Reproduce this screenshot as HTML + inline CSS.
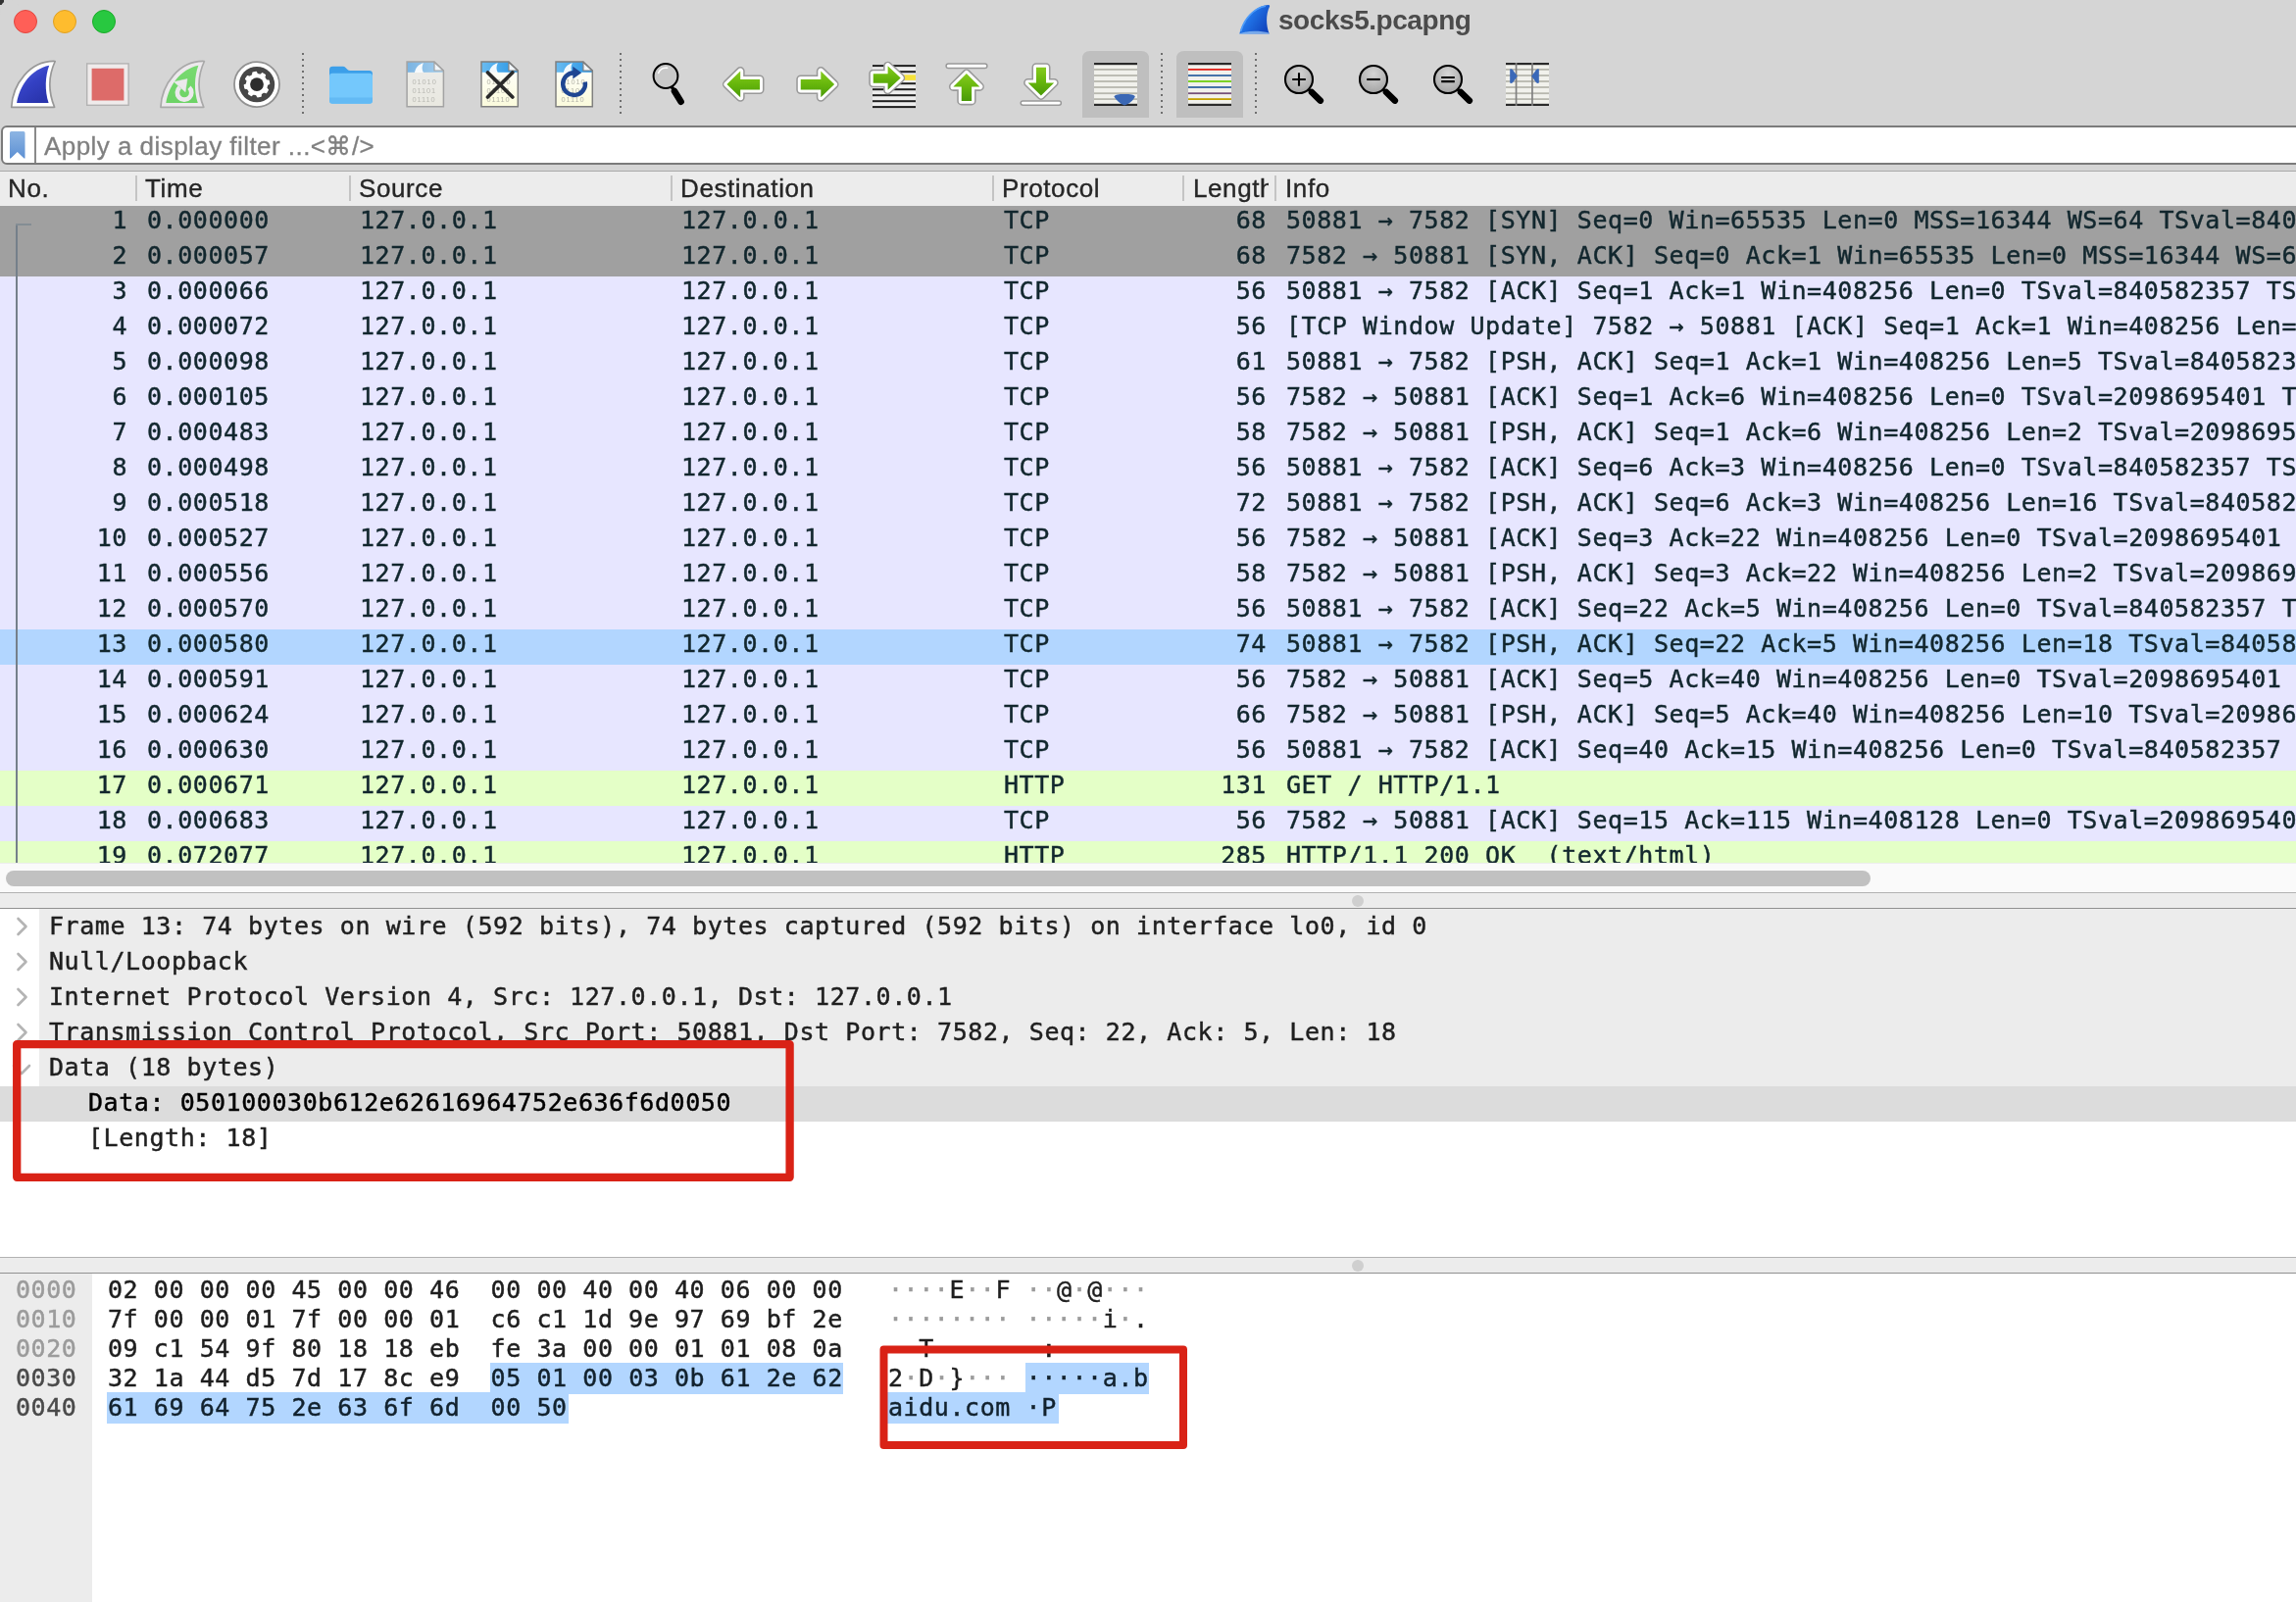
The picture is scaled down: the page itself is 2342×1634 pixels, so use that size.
<!DOCTYPE html>
<html lang="en">
<head>
<meta charset="utf-8">
<title>socks5.pcapng</title>
<style>
*{box-sizing:border-box;margin:0;padding:0}
html,body{width:2342px;height:1634px;overflow:hidden;background:#d5d5d5}
body{position:relative;font-family:"Liberation Sans",sans-serif;color:#222}
.abs{position:absolute}
.pr,.dr,.hr{-webkit-text-stroke:0.45px}
#app{position:absolute;left:0;top:0;width:2342px;height:1634px;overflow:hidden;will-change:transform;background:#d5d5d5}
#corner{position:absolute;left:0;top:0;width:4px;height:5px;background:#333}
#corner i{position:absolute;left:0;top:0;width:20px;height:20px;border-radius:10px;background:#d5d5d5}
.tl{position:absolute;top:10px;width:24px;height:24px;border-radius:12px;border:1px solid}
#title{position:absolute;left:1304px;top:2px;height:38px;line-height:38px;font-size:28px;font-weight:bold;color:#4b4b4b;letter-spacing:-0.45px;white-space:pre}
.ico{position:absolute}
.sep{position:absolute;top:54px;width:2px;height:63px;background:repeating-linear-gradient(to bottom,#6f6f6f 0,#6f6f6f 2px,transparent 2px,transparent 6px)}
.pressed{position:absolute;top:52px;width:68px;height:68px;border-radius:9px;background:#bdbdbd}
#filter{position:absolute;left:1px;top:128px;width:2400px;height:40px;border:2px solid #7b7b7b;border-radius:6px;background:#fff}
#filter .bm{position:absolute;left:6.3px;top:2px}
#filter .vl{position:absolute;left:32px;top:0;width:2px;height:36px;background:#8a8a8a}
#filter .ph{position:absolute;left:42px;top:1px;height:36px;line-height:36px;font-size:26px;color:#808080;white-space:pre;letter-spacing:0.45px;-webkit-text-stroke:0.3px}
#hdr{position:absolute;left:0;top:174px;width:2342px;height:36px;background:#ececec;border-top:1px solid #aaa}
#hdr span{position:absolute;top:0;height:35px;line-height:35px;font-size:26px;color:#262626;white-space:pre;letter-spacing:0.6px;-webkit-text-stroke:0.35px}
#hdr i{position:absolute;top:4px;width:2px;height:26px;background:#c4c4c4}
#plist{position:absolute;left:0;top:210px;width:2342px;height:670px;overflow:hidden;background:#fff}
.pr{position:relative;height:36px;width:2342px;overflow:hidden;font-family:"DejaVu Sans Mono","Liberation Mono",monospace;font-size:25px;letter-spacing:0.57px;line-height:30px;white-space:pre;color:#12272e}
.pr .c{position:absolute;top:0;height:36px}
.pr.syn{background:#a0a0a0}
.pr.tcp{background:#e7e6ff}
.pr.web{background:#e4ffc7}
.pr.sel{background:#b2d6ff}
.no{left:0;width:130px;text-align:right}
.tm{left:150px}
.src{left:367px}
.dst{left:695px}
.pro{left:1024px}
.len{left:1200px;width:92px;text-align:right}
.inf{left:1312px}
#relline{position:absolute;left:16.3px;top:229px;width:1.5px;height:651px;background:#75808a}
#reltick{position:absolute;left:16px;top:228px;width:16px;height:2px;background:#848d94}
#hsb{position:absolute;left:0;top:880px;width:2342px;height:30px;background:#fafafa;border-top:1px solid #ededed}
#hsb i{position:absolute;left:6px;top:7px;width:1902px;height:16px;border-radius:8px;background:#c1c1c1}
.split{position:absolute;left:0;width:2342px;height:17px;background:#ececec;border-top:1px solid #b2b2b2;border-bottom:1px solid #919191}
.split i{position:absolute;left:1379px;top:2px;width:12px;height:12px;border-radius:6px;background:#cfcfcf}
#detail{position:absolute;left:0;top:927px;padding-top:1px;width:2342px;height:355px;background:#fff;overflow:hidden}
.dr{position:relative;height:36px;width:2342px;font-family:"DejaVu Sans Mono","Liberation Mono",monospace;font-size:25px;letter-spacing:0.57px;line-height:30px;white-space:pre;color:#1f1f1f}
.dr .bg{position:absolute;left:40px;top:-1px;right:0;height:37px;background:#ececec}
.dr .tx{position:absolute;left:50px;top:2px}
.dr svg{position:absolute;left:14px;top:6px}
.dr.sel{background:#dcdcdc;color:#000}
.dr.ch .tx{left:90px}
#hex{position:absolute;left:0;top:1299px;width:2342px;height:335px;background:#fff;overflow:hidden}
#hex .gut{position:absolute;left:0;top:0;width:94px;height:335px;background:#ececec}
.hr{position:absolute;left:0;height:30px;width:2342px;font-family:"DejaVu Sans Mono","Liberation Mono",monospace;font-size:25px;letter-spacing:0.57px;line-height:30px;white-space:pre;color:#1e1e1e}
.hr .of{position:absolute;left:16px;top:0;color:#9b9b9b}
.hr .of.d{color:#4a4a4a}
.hr .hx{position:absolute;left:110px;top:0}
.hr .as{position:absolute;left:906px;top:0}
.hl{background:#b2d6ff;color:#12222e;margin-left:-1px;padding-left:1px;padding-top:0.6px;padding-bottom:1.9px}
.hl.e{padding-right:1.8px}
.g{color:#9b9b9b}
.hl .g{color:#12222e}
.redbox{position:absolute;left:0;top:0}
</style>
</head>
<body>

<div id="app">
<div id="corner"><i></i></div>
<div class="tl" style="left:14px;background:#ff5f57;border-color:#e2463f"></div>
<div class="tl" style="left:54px;background:#febc2e;border-color:#dfa023"></div>
<div class="tl" style="left:94px;background:#28c840;border-color:#1aab29"></div>
<div id="title">socks5.pcapng</div>
<svg class="abs" style="left:0;top:0" width="1700" height="128" viewBox="0 0 1700 128">
<defs>
<linearGradient id="finb" x1="0" y1="0" x2="0.6" y2="1"><stop offset="0" stop-color="#5563e0"/><stop offset="0.55" stop-color="#3441c4"/><stop offset="1" stop-color="#2a35ae"/></linearGradient>
<linearGradient id="fing" x1="0" y1="0" x2="0" y2="1"><stop offset="0" stop-color="#78da70"/><stop offset="1" stop-color="#6dd366"/></linearGradient>
<linearGradient id="grn" x1="0" y1="0" x2="0" y2="1"><stop offset="0" stop-color="#86cb1e"/><stop offset="0.5" stop-color="#66b60c"/><stop offset="1" stop-color="#4a9a08"/></linearGradient>
<radialGradient id="zg" cx="0.5" cy="0.3" r="0.8"><stop offset="0" stop-color="#d6d6d6"/><stop offset="1" stop-color="#9c9c9c"/></radialGradient>
<linearGradient id="ticon" x1="0" y1="0" x2="1" y2="0.6"><stop offset="0" stop-color="#4a9af5"/><stop offset="0.5" stop-color="#1f6fe3"/><stop offset="1" stop-color="#1248c0"/></linearGradient>
</defs>
<path d="M1264.3,34.5 C1267.4,20.2 1278.6,6.2 1293.6,5 Q1295.4,5 1295.1,6.4 C1291,15.1 1291.3,25.4 1294.7,34.5 Z" fill="url(#ticon)"/>
<path d="M1265.6,32 C1268.6,20.4 1278.6,8.2 1291,6.3" fill="none" stroke="#58a6ff" stroke-width="1.6" opacity="0.8"/>
<path d="M1264.2,34.7 C1271,31 1285,31.2 1294.4,33.4 L1294.8,34.8 Z" fill="#8fbdf3" opacity="0.8"/>
<g transform="translate(0,0)"><path d="M11.7,109.3 C12.8,86.1 30.5,61.6 56.2,62.5 C50,76 48.5,92 55.6,109.3 Z" fill="#ffffff" stroke="#989898" stroke-width="1.7" stroke-linejoin="round"/><path d="M17.1,105 C20,87 32,70.5 50.2,66.7 C46,78 45.5,92 49.6,105 Z" fill="url(#finb)"/></g>
<rect x="88.7" y="64.9" width="42.4" height="42.4" fill="#efebeb" stroke="#b2b2b2" stroke-width="1.4"/>
<rect x="93.6" y="69.8" width="32.8" height="32.7" fill="#dd6b69"/>
<g transform="translate(152.2,0)"><path d="M11.7,109.3 C12.8,86.1 30.5,61.6 56.2,62.5 C50,76 48.5,92 55.6,109.3 Z" fill="#ece9ec" stroke="#a9a9a9" stroke-width="1.7" stroke-linejoin="round"/><path d="M17.1,105 C20,87 32,70.5 50.2,66.7 C46,78 45.5,92 49.6,105 Z" fill="url(#fing)"/></g>
<path d="M193.0,89.25 A7.2,7.2 0 1 1 183.4,89.0" fill="none" stroke="#ebe9ec" stroke-width="4.7"/>
<path d="M177.5,83.5 L191,80.5 L189.1,93.8 Z" fill="#ebe9ec" stroke="#ebe9ec" stroke-width="0.5"/>
<circle cx="262" cy="86.1" r="23" fill="#ffffff" stroke="#929292" stroke-width="1.8"/>
<circle cx="262" cy="86.1" r="18.2" fill="#474747"/>
<path d="M271.59,81.82 L274.03,82.04 L274.68,85.36 L272.49,86.48 L271.81,89.85 L273.38,91.74 L271.49,94.54 L269.15,93.79 L266.28,95.69 L266.06,98.13 L262.74,98.78 L261.62,96.59 L258.25,95.91 L256.36,97.48 L253.56,95.59 L254.31,93.25 L252.41,90.38 L249.97,90.16 L249.32,86.84 L251.51,85.72 L252.19,82.35 L250.62,80.46 L252.51,77.66 L254.85,78.41 L257.72,76.51 L257.94,74.07 L261.26,73.42 L262.38,75.61 L265.75,76.29 L267.64,74.72 L270.44,76.61 L269.69,78.95Z" fill="#ffffff" stroke="#ffffff" stroke-width="1.3" stroke-linejoin="round"/>
<circle cx="262" cy="86.1" r="6.9" fill="#2e2e2e"/>
<path d="M336,71.2 q0,-3.4 3.4,-3.4 h10.4 q1.6,0 2.7,1.1 l2,2 q1.1,1.1 2.7,1.1 h19.4 q3.4,0 3.4,3.4 v12 h-44 z" fill="#3c9fe9"/>
<path d="M336,78 q0,-3.2 3.2,-3.2 h37.6 q3.2,0 3.2,3.2 v24.6 q0,3.2 -3.2,3.2 h-37.6 q-3.2,0 -3.2,-3.2 z" fill="#74c8fc"/>
<path d="M336,99.6 h44 v3 q0,3.2 -3.2,3.2 h-37.6 q-3.2,0 -3.2,-3.2 z" fill="#63baf4"/>
<g transform="translate(414.4,0)"><defs><linearGradient id="f1b" x1="0" y1="0" x2="1" y2="0"><stop offset="0" stop-color="#79b3e2"/><stop offset="1" stop-color="#a6d0ef"/></linearGradient><linearGradient id="f1y" x1="0" y1="0" x2="0" y2="1"><stop offset="0" stop-color="#ececea"/><stop offset="1" stop-color="#e9e8e0"/></linearGradient><clipPath id="f1c"><path d="M0.7,63.1 H28.6 L38,72 V108.8 H0.7 Z"/></clipPath></defs><path d="M0.7,63.1 H28.6 L38,72 V108.8 H0.7 Z" fill="url(#f1y)"/><g clip-path="url(#f1c)"><rect x="0" y="62" width="39" height="11.8" fill="url(#f1b)"/><path d="M8.5,74 C9.5,69 12.5,65.5 17.5,64.2 C15.8,67.5 15.8,71 17.5,74 Z" fill="#fff" opacity="0.92"/></g><path d="M28.6,63.1 V72 H38 Z" fill="#f1f6fb" stroke="#a3a3a3" stroke-width="1.2" stroke-linejoin="round"/><text x="6.2" y="86.3" font-family="Liberation Sans, sans-serif" font-size="7.4" letter-spacing="0.9" fill="#b9b9b3">01010</text><text x="6.2" y="95.1" font-family="Liberation Sans, sans-serif" font-size="7.4" letter-spacing="0.9" fill="#b9b9b3">01101</text><text x="6.2" y="104.0" font-family="Liberation Sans, sans-serif" font-size="7.4" letter-spacing="0.9" fill="#b9b9b3">01110</text><path d="M0.7,63.1 H28.6 L38,72 V108.8 H0.7 Z" fill="none" stroke="#a3a3a3" stroke-width="1.5" stroke-linejoin="miter"/></g>
<g transform="translate(490.3,0)"><defs><linearGradient id="f2b" x1="0" y1="0" x2="1" y2="0"><stop offset="0" stop-color="#6bbcf1"/><stop offset="1" stop-color="#2794e4"/></linearGradient><linearGradient id="f2y" x1="0" y1="0" x2="0" y2="1"><stop offset="0" stop-color="#ffffff"/><stop offset="1" stop-color="#fbfbdc"/></linearGradient><clipPath id="f2c"><path d="M0.7,63.1 H28.6 L38,72 V108.8 H0.7 Z"/></clipPath></defs><path d="M0.7,63.1 H28.6 L38,72 V108.8 H0.7 Z" fill="url(#f2y)"/><g clip-path="url(#f2c)"><rect x="0" y="62" width="39" height="11.8" fill="url(#f2b)"/><path d="M8.5,74 C9.5,69 12.5,65.5 17.5,64.2 C15.8,67.5 15.8,71 17.5,74 Z" fill="#fff" opacity="0.92"/></g><path d="M28.6,63.1 V72 H38 Z" fill="#f1f6fb" stroke="#7f7f7f" stroke-width="1.2" stroke-linejoin="round"/><text x="6.2" y="86.3" font-family="Liberation Sans, sans-serif" font-size="7.4" letter-spacing="0.9" fill="#b4b4a8">01010</text><text x="6.2" y="95.1" font-family="Liberation Sans, sans-serif" font-size="7.4" letter-spacing="0.9" fill="#b4b4a8">01101</text><text x="6.2" y="104.0" font-family="Liberation Sans, sans-serif" font-size="7.4" letter-spacing="0.9" fill="#b4b4a8">01110</text><path d="M0.7,63.1 H28.6 L38,72 V108.8 H0.7 Z" fill="none" stroke="#7f7f7f" stroke-width="1.5" stroke-linejoin="miter"/></g>
<path d="M497.5,74 L522.8,99 M522.8,74 L497.5,99" stroke="#2a2a2a" stroke-width="3.7" stroke-linecap="round" fill="none"/>
<g transform="translate(566.3,0)"><defs><linearGradient id="f3b" x1="0" y1="0" x2="1" y2="0"><stop offset="0" stop-color="#6bbcf1"/><stop offset="1" stop-color="#2794e4"/></linearGradient><linearGradient id="f3y" x1="0" y1="0" x2="0" y2="1"><stop offset="0" stop-color="#ffffff"/><stop offset="1" stop-color="#fbfbdc"/></linearGradient><clipPath id="f3c"><path d="M0.7,63.1 H28.6 L38,72 V108.8 H0.7 Z"/></clipPath></defs><path d="M0.7,63.1 H28.6 L38,72 V108.8 H0.7 Z" fill="url(#f3y)"/><g clip-path="url(#f3c)"><rect x="0" y="62" width="39" height="11.8" fill="url(#f3b)"/><path d="M8.5,74 C9.5,69 12.5,65.5 17.5,64.2 C15.8,67.5 15.8,71 17.5,74 Z" fill="#fff" opacity="0.92"/></g><path d="M28.6,63.1 V72 H38 Z" fill="#f1f6fb" stroke="#7f7f7f" stroke-width="1.2" stroke-linejoin="round"/><text x="6.2" y="86.3" font-family="Liberation Sans, sans-serif" font-size="7.4" letter-spacing="0.9" fill="#b4b4a8">01010</text><text x="6.2" y="95.1" font-family="Liberation Sans, sans-serif" font-size="7.4" letter-spacing="0.9" fill="#b4b4a8">01101</text><text x="6.2" y="104.0" font-family="Liberation Sans, sans-serif" font-size="7.4" letter-spacing="0.9" fill="#b4b4a8">01110</text><path d="M0.7,63.1 H28.6 L38,72 V108.8 H0.7 Z" fill="none" stroke="#7f7f7f" stroke-width="1.5" stroke-linejoin="miter"/></g>
<path d="M585.5,74.2 A11.4,11.4 0 1 0 596.8,83.6" fill="none" stroke="#1f4692" stroke-width="4.4"/>
<path d="M584.3,67.8 L593.2,74.2 L584.3,80.4 Z" fill="#1f4692"/>
<line x1="684.6" y1="87.6" x2="688" y2="93" stroke="#000" stroke-width="3.4"/>
<line x1="688" y1="93" x2="694.6" y2="103.8" stroke="#000" stroke-width="6.6" stroke-linecap="round"/>
<circle cx="679" cy="77.5" r="12.4" fill="#c9c9c9" stroke="#000" stroke-width="2"/>
<path d="M671.6,74.4 A8.2,8.2 0 0 1 680.6,69.3" fill="none" stroke="#ffffff" stroke-width="1.5" stroke-linecap="round"/>
<path d="M741.4,86 L755.2,72.6 V81 H775 V91.6 H755.2 V99.3 Z" fill="none" stroke="#999999" stroke-width="9" stroke-linejoin="round"/><path d="M741.4,86 L755.2,72.6 V81 H775 V91.6 H755.2 V99.3 Z" fill="none" stroke="#ffffff" stroke-width="5.9" stroke-linejoin="round"/><path d="M741.4,86 L755.2,72.6 V81 H775 V91.6 H755.2 V99.3 Z" fill="url(#grn)"/>
<path d="M851.1,86 L837.3,72.6 V81 H816.75 V91.6 H837.3 V99.3 Z" fill="none" stroke="#999999" stroke-width="9" stroke-linejoin="round"/><path d="M851.1,86 L837.3,72.6 V81 H816.75 V91.6 H837.3 V99.3 Z" fill="none" stroke="#ffffff" stroke-width="5.9" stroke-linejoin="round"/><path d="M851.1,86 L837.3,72.6 V81 H816.75 V91.6 H837.3 V99.3 Z" fill="url(#grn)"/>
<rect x="890" y="66" width="44" height="44" fill="#ededed"/><rect x="890" y="66.1" width="44" height="2" fill="#1f1f1f"/><rect x="890" y="72.2" width="44" height="2" fill="#1f1f1f"/><rect x="890" y="84.2" width="44" height="2" fill="#1f1f1f"/><rect x="890" y="90.2" width="44" height="2" fill="#1f1f1f"/><rect x="890" y="96.2" width="44" height="2" fill="#1f1f1f"/><rect x="890" y="102.2" width="44" height="2" fill="#1f1f1f"/><rect x="890" y="108.1" width="44" height="2" fill="#1f1f1f"/><rect x="920" y="76.3" width="14" height="5.6" fill="#f6e23c"/>
<path d="M918.7,79.5 L905.6,67.2 V75.25 H890.75 V84.75 H905.6 V91.8 Z" fill="none" stroke="#999999" stroke-width="9" stroke-linejoin="round"/><path d="M918.7,79.5 L905.6,67.2 V75.25 H890.75 V84.75 H905.6 V91.8 Z" fill="none" stroke="#ffffff" stroke-width="5.9" stroke-linejoin="round"/><path d="M918.7,79.5 L905.6,67.2 V75.25 H890.75 V84.75 H905.6 V91.8 Z" fill="url(#grn)"/>
<rect x="965.1" y="64.9" width="41.8" height="4.6" rx="2.3" fill="#ffffff" stroke="#999999" stroke-width="1.5"/>
<path d="M985.9,75 L999.4,88.4 H991.1 V102.9 H980.75 V88.4 H972.4 Z" fill="none" stroke="#999999" stroke-width="9" stroke-linejoin="round"/><path d="M985.9,75 L999.4,88.4 H991.1 V102.9 H980.75 V88.4 H972.4 Z" fill="none" stroke="#ffffff" stroke-width="5.9" stroke-linejoin="round"/><path d="M985.9,75 L999.4,88.4 H991.1 V102.9 H980.75 V88.4 H972.4 Z" fill="url(#grn)"/>
<rect x="1041.2" y="102.9" width="41.2" height="4.4" rx="2.2" fill="#ffffff" stroke="#999999" stroke-width="1.5"/>
<path d="M1061.9,97.4 L1075.2,84.4 H1067 V68.75 H1057 V84.4 H1048.6 Z" fill="none" stroke="#999999" stroke-width="9" stroke-linejoin="round"/><path d="M1061.9,97.4 L1075.2,84.4 H1067 V68.75 H1057 V84.4 H1048.6 Z" fill="none" stroke="#ffffff" stroke-width="5.9" stroke-linejoin="round"/><path d="M1061.9,97.4 L1075.2,84.4 H1067 V68.75 H1057 V84.4 H1048.6 Z" fill="url(#grn)"/>
<path d="M1104,120 V60 q0,-8 8,-8 h52 q8,0 8,8 V120 Z" fill="#bfbfbf"/>
<path d="M1200,120 V60 q0,-8 8,-8 h52 q8,0 8,8 V120 Z" fill="#bfbfbf"/>
<rect x="1116" y="64" width="44" height="44" fill="#f1f1ec"/><rect x="1116" y="64" width="44" height="2.2" fill="#2a2a2a"/><rect x="1116" y="105.8" width="44" height="2.2" fill="#2a2a2a"/><rect x="1116" y="70.0" width="44" height="1.8" fill="#b7b7ae"/><rect x="1116" y="76.1" width="44" height="1.8" fill="#b7b7ae"/><rect x="1116" y="82.1" width="44" height="1.8" fill="#b7b7ae"/><rect x="1116" y="88.1" width="44" height="1.8" fill="#b7b7ae"/><rect x="1116" y="94.3" width="44" height="1.8" fill="#b7b7ae"/><rect x="1116" y="100.2" width="44" height="1.8" fill="#b7b7ae"/>
<path d="M1136.4,98.6 C1137.5,96.4 1141,96 1147,96 C1153,96 1156.8,96.4 1157.8,98.6 C1156,102.5 1152,106 1147,107.6 C1142.5,106 1138.5,102.5 1136.4,98.6 Z" fill="#3b68b5"/>
<rect x="1212" y="64" width="44" height="44" fill="#f1f1ec"/><rect x="1212" y="64" width="44" height="2.2" fill="#2a2a2a"/><rect x="1212" y="105.8" width="44" height="2.2" fill="#2a2a2a"/><rect x="1212" y="70.0" width="44" height="1.8" fill="#e2241c"/><rect x="1212" y="76.1" width="44" height="1.8" fill="#3465a4"/><rect x="1212" y="82.1" width="44" height="1.8" fill="#6fcf12"/><rect x="1212" y="88.1" width="44" height="1.8" fill="#3465a4"/><rect x="1212" y="94.3" width="44" height="1.8" fill="#75507b"/><rect x="1212" y="100.2" width="44" height="1.8" fill="#c4a000"/>
<line x1="1334" y1="90.3" x2="1338" y2="94" stroke="#000" stroke-width="3.2"/><line x1="1338" y1="94" x2="1346.8" y2="102.6" stroke="#000" stroke-width="6.6" stroke-linecap="round"/><circle cx="1325" cy="81" r="14" fill="url(#zg)" stroke="#000" stroke-width="2.1"/><path d="M1318.2,81 h13.6 M1325,74.2 v13.6" stroke="#000" stroke-width="2.1" fill="none"/>
<line x1="1410" y1="90.3" x2="1414" y2="94" stroke="#000" stroke-width="3.2"/><line x1="1414" y1="94" x2="1422.8" y2="102.6" stroke="#000" stroke-width="6.6" stroke-linecap="round"/><circle cx="1401" cy="81" r="14" fill="url(#zg)" stroke="#000" stroke-width="2.1"/><path d="M1394.2,81 h13.6" stroke="#000" stroke-width="2.1" fill="none"/>
<line x1="1486" y1="90.3" x2="1490" y2="94" stroke="#000" stroke-width="3.2"/><line x1="1490" y1="94" x2="1498.8" y2="102.6" stroke="#000" stroke-width="6.6" stroke-linecap="round"/><circle cx="1477" cy="81" r="14" fill="url(#zg)" stroke="#000" stroke-width="2.1"/><path d="M1470.2,79 h13.6 M1470.2,83.1 h13.6" stroke="#000" stroke-width="2.1" fill="none"/>
<rect x="1536" y="64" width="44" height="44" fill="#f1f1ec"/><rect x="1536" y="64" width="44" height="2.2" fill="#2a2a2a"/><rect x="1536" y="105.8" width="44" height="2.2" fill="#2a2a2a"/><rect x="1536" y="70.0" width="44" height="1.8" fill="#b7b7ae"/><rect x="1536" y="76.1" width="44" height="1.8" fill="#b7b7ae"/><rect x="1536" y="82.1" width="44" height="1.8" fill="#b7b7ae"/><rect x="1536" y="88.1" width="44" height="1.8" fill="#b7b7ae"/><rect x="1536" y="94.3" width="44" height="1.8" fill="#b7b7ae"/><rect x="1536" y="100.2" width="44" height="1.8" fill="#b7b7ae"/>
<rect x="1545.7" y="64" width="1.7" height="44" fill="#808080"/><rect x="1562.1" y="64" width="1.7" height="44" fill="#808080"/>
<path d="M1540.2,70.6 Q1541.5,69.8 1543,71.2 L1547.8,77.7 L1543,84.2 Q1541.5,85.4 1540.2,84.6 Z" fill="#3a68b8"/>
<path d="M1569.8,70.6 Q1568.5,69.8 1567,71.2 L1562.2,77.7 L1567,84.2 Q1568.5,85.4 1569.8,84.6 Z" fill="#3a68b8"/>
</svg>
<div class="sep" style="left:308px"></div>
<div class="sep" style="left:632px"></div>
<div class="sep" style="left:1184px"></div>
<div class="sep" style="left:1280px"></div>
<div id="filter">
<svg class="bm" width="18" height="30" viewBox="0 0 18 30"><defs><linearGradient id="bmg" x1="0" y1="0" x2="0" y2="1"><stop offset="0" stop-color="#8db5e3"/><stop offset="1" stop-color="#5d90d3"/></linearGradient></defs><path d="M2.5 2h12.5q1.5 0 1.5 1.5v25.3q0 1.4 -1.2 0.5l-6.55-6.2-6.55 6.2q-1.2 0.9 -1.2 -0.5v-25.3q0-1.5 1.5-1.5z" fill="url(#bmg)"/></svg>
<div class="vl"></div>
<div class="ph">Apply a display filter ...&lt;⌘/&gt;</div>
</div>
<div id="hdr">
<span style="left:8px">No.</span><i style="left:138px"></i>
<span style="left:148px">Time</span><i style="left:356px"></i>
<span style="left:366px">Source</span><i style="left:684px"></i>
<span style="left:694px">Destination</span><i style="left:1012px"></i>
<span style="left:1022px">Protocol</span><i style="left:1206px"></i>
<span style="left:1217px;width:77px;overflow:hidden">Length</span><i style="left:1300px"></i>
<span style="left:1311px">Info</span>
</div>

<div id="plist">
<div class="pr syn"><span class="c no">1</span><span class="c tm">0.000000</span><span class="c src">127.0.0.1</span><span class="c dst">127.0.0.1</span><span class="c pro">TCP</span><span class="c len">68</span><span class="c inf">50881 → 7582 [SYN] Seq=0 Win=65535 Len=0 MSS=16344 WS=64 TSval=840582357 TSecr=0 SACK_PERM</span></div>
<div class="pr syn"><span class="c no">2</span><span class="c tm">0.000057</span><span class="c src">127.0.0.1</span><span class="c dst">127.0.0.1</span><span class="c pro">TCP</span><span class="c len">68</span><span class="c inf">7582 → 50881 [SYN, ACK] Seq=0 Ack=1 Win=65535 Len=0 MSS=16344 WS=64 TSval=2098695401 TSecr=840582357 SACK_PERM</span></div>
<div class="pr tcp"><span class="c no">3</span><span class="c tm">0.000066</span><span class="c src">127.0.0.1</span><span class="c dst">127.0.0.1</span><span class="c pro">TCP</span><span class="c len">56</span><span class="c inf">50881 → 7582 [ACK] Seq=1 Ack=1 Win=408256 Len=0 TSval=840582357 TSecr=2098695401</span></div>
<div class="pr tcp"><span class="c no">4</span><span class="c tm">0.000072</span><span class="c src">127.0.0.1</span><span class="c dst">127.0.0.1</span><span class="c pro">TCP</span><span class="c len">56</span><span class="c inf">[TCP Window Update] 7582 → 50881 [ACK] Seq=1 Ack=1 Win=408256 Len=0 TSval=2098695401 TSecr=840582357</span></div>
<div class="pr tcp"><span class="c no">5</span><span class="c tm">0.000098</span><span class="c src">127.0.0.1</span><span class="c dst">127.0.0.1</span><span class="c pro">TCP</span><span class="c len">61</span><span class="c inf">50881 → 7582 [PSH, ACK] Seq=1 Ack=1 Win=408256 Len=5 TSval=840582357 TSecr=2098695401</span></div>
<div class="pr tcp"><span class="c no">6</span><span class="c tm">0.000105</span><span class="c src">127.0.0.1</span><span class="c dst">127.0.0.1</span><span class="c pro">TCP</span><span class="c len">56</span><span class="c inf">7582 → 50881 [ACK] Seq=1 Ack=6 Win=408256 Len=0 TSval=2098695401 TSecr=840582357</span></div>
<div class="pr tcp"><span class="c no">7</span><span class="c tm">0.000483</span><span class="c src">127.0.0.1</span><span class="c dst">127.0.0.1</span><span class="c pro">TCP</span><span class="c len">58</span><span class="c inf">7582 → 50881 [PSH, ACK] Seq=1 Ack=6 Win=408256 Len=2 TSval=2098695401 TSecr=840582357</span></div>
<div class="pr tcp"><span class="c no">8</span><span class="c tm">0.000498</span><span class="c src">127.0.0.1</span><span class="c dst">127.0.0.1</span><span class="c pro">TCP</span><span class="c len">56</span><span class="c inf">50881 → 7582 [ACK] Seq=6 Ack=3 Win=408256 Len=0 TSval=840582357 TSecr=2098695401</span></div>
<div class="pr tcp"><span class="c no">9</span><span class="c tm">0.000518</span><span class="c src">127.0.0.1</span><span class="c dst">127.0.0.1</span><span class="c pro">TCP</span><span class="c len">72</span><span class="c inf">50881 → 7582 [PSH, ACK] Seq=6 Ack=3 Win=408256 Len=16 TSval=840582357 TSecr=2098695401</span></div>
<div class="pr tcp"><span class="c no">10</span><span class="c tm">0.000527</span><span class="c src">127.0.0.1</span><span class="c dst">127.0.0.1</span><span class="c pro">TCP</span><span class="c len">56</span><span class="c inf">7582 → 50881 [ACK] Seq=3 Ack=22 Win=408256 Len=0 TSval=2098695401 TSecr=840582357</span></div>
<div class="pr tcp"><span class="c no">11</span><span class="c tm">0.000556</span><span class="c src">127.0.0.1</span><span class="c dst">127.0.0.1</span><span class="c pro">TCP</span><span class="c len">58</span><span class="c inf">7582 → 50881 [PSH, ACK] Seq=3 Ack=22 Win=408256 Len=2 TSval=2098695401 TSecr=840582357</span></div>
<div class="pr tcp"><span class="c no">12</span><span class="c tm">0.000570</span><span class="c src">127.0.0.1</span><span class="c dst">127.0.0.1</span><span class="c pro">TCP</span><span class="c len">56</span><span class="c inf">50881 → 7582 [ACK] Seq=22 Ack=5 Win=408256 Len=0 TSval=840582357 TSecr=2098695401</span></div>
<div class="pr sel"><span class="c no">13</span><span class="c tm">0.000580</span><span class="c src">127.0.0.1</span><span class="c dst">127.0.0.1</span><span class="c pro">TCP</span><span class="c len">74</span><span class="c inf">50881 → 7582 [PSH, ACK] Seq=22 Ack=5 Win=408256 Len=18 TSval=840582357 TSecr=2098695401</span></div>
<div class="pr tcp"><span class="c no">14</span><span class="c tm">0.000591</span><span class="c src">127.0.0.1</span><span class="c dst">127.0.0.1</span><span class="c pro">TCP</span><span class="c len">56</span><span class="c inf">7582 → 50881 [ACK] Seq=5 Ack=40 Win=408256 Len=0 TSval=2098695401 TSecr=840582357</span></div>
<div class="pr tcp"><span class="c no">15</span><span class="c tm">0.000624</span><span class="c src">127.0.0.1</span><span class="c dst">127.0.0.1</span><span class="c pro">TCP</span><span class="c len">66</span><span class="c inf">7582 → 50881 [PSH, ACK] Seq=5 Ack=40 Win=408256 Len=10 TSval=2098695401 TSecr=840582357</span></div>
<div class="pr tcp"><span class="c no">16</span><span class="c tm">0.000630</span><span class="c src">127.0.0.1</span><span class="c dst">127.0.0.1</span><span class="c pro">TCP</span><span class="c len">56</span><span class="c inf">50881 → 7582 [ACK] Seq=40 Ack=15 Win=408256 Len=0 TSval=840582357 TSecr=2098695401</span></div>
<div class="pr web"><span class="c no">17</span><span class="c tm">0.000671</span><span class="c src">127.0.0.1</span><span class="c dst">127.0.0.1</span><span class="c pro">HTTP</span><span class="c len">131</span><span class="c inf">GET / HTTP/1.1 </span></div>
<div class="pr tcp"><span class="c no">18</span><span class="c tm">0.000683</span><span class="c src">127.0.0.1</span><span class="c dst">127.0.0.1</span><span class="c pro">TCP</span><span class="c len">56</span><span class="c inf">7582 → 50881 [ACK] Seq=15 Ack=115 Win=408128 Len=0 TSval=2098695401 TSecr=840582357</span></div>
<div class="pr web"><span class="c no">19</span><span class="c tm">0.072077</span><span class="c src">127.0.0.1</span><span class="c dst">127.0.0.1</span><span class="c pro">HTTP</span><span class="c len">285</span><span class="c inf">HTTP/1.1 200 OK  (text/html)</span></div>
</div>
<div id="relline"></div><div id="reltick"></div>
<div id="hsb"><i></i></div>
<div class="split" style="top:910px"><i></i></div>
<div id="detail">
<div class="dr"><div class="bg"></div><svg width="16" height="22" viewBox="0 0 16 22"><path d="M4.5 3l8 8-8 8" fill="none" stroke="#b4b4b4" stroke-width="2.6" stroke-linecap="round" stroke-linejoin="round"/></svg><span class="tx">Frame 13: 74 bytes on wire (592 bits), 74 bytes captured (592 bits) on interface lo0, id 0</span></div>
<div class="dr"><div class="bg"></div><svg width="16" height="22" viewBox="0 0 16 22"><path d="M4.5 3l8 8-8 8" fill="none" stroke="#b4b4b4" stroke-width="2.6" stroke-linecap="round" stroke-linejoin="round"/></svg><span class="tx">Null/Loopback</span></div>
<div class="dr"><div class="bg"></div><svg width="16" height="22" viewBox="0 0 16 22"><path d="M4.5 3l8 8-8 8" fill="none" stroke="#b4b4b4" stroke-width="2.6" stroke-linecap="round" stroke-linejoin="round"/></svg><span class="tx">Internet Protocol Version 4, Src: 127.0.0.1, Dst: 127.0.0.1</span></div>
<div class="dr"><div class="bg"></div><svg width="16" height="22" viewBox="0 0 16 22"><path d="M4.5 3l8 8-8 8" fill="none" stroke="#b4b4b4" stroke-width="2.6" stroke-linecap="round" stroke-linejoin="round"/></svg><span class="tx">Transmission Control Protocol, Src Port: 50881, Dst Port: 7582, Seq: 22, Ack: 5, Len: 18</span></div>
<div class="dr"><div class="bg"></div><svg width="22" height="16" viewBox="0 0 22 16" style="left:11px;top:11px"><path d="M3 4l8 8 8-8" fill="none" stroke="#b4b4b4" stroke-width="2.6" stroke-linecap="round" stroke-linejoin="round"/></svg><span class="tx">Data (18 bytes)</span></div>
<div class="dr sel ch"><span class="tx">Data: 050100030b612e62616964752e636f6d0050</span></div>
<div class="dr ch"><span class="tx">[Length: 18]</span></div>
</div>
<div class="split" style="top:1282px;height:17px"><i></i></div>
<div id="hex">
<div class="gut"></div>
<div class="hr" style="top:2px"><span class="of">0000</span><span class="hx">02 00 00 00 45 00 00 46  00 00 40 00 40 06 00 00</span><span class="as"><span class="g">····</span>E<span class="g">··</span>F <span class="g">··</span>@<span class="g">·</span>@<span class="g">···</span></span></div>
<div class="hr" style="top:32px"><span class="of">0010</span><span class="hx">7f 00 00 01 7f 00 00 01  c6 c1 1d 9e 97 69 bf 2e</span><span class="as"><span class="g">········</span> <span class="g">·····</span>i<span class="g">·</span>.</span></div>
<div class="hr" style="top:62px"><span class="of">0020</span><span class="hx">09 c1 54 9f 80 18 18 eb  fe 3a 00 00 01 01 08 0a</span><span class="as"><span class="g">··</span>T<span class="g">·····</span> <span class="g">·</span>:<span class="g">······</span></span></div>
<div class="hr" style="top:92px"><span class="of d">0030</span><span class="hx">32 1a 44 d5 7d 17 8c e9  <span class="hl">05 01 00 03 0b 61 2e 62</span></span><span class="as">2<span class="g">·</span>D<span class="g">·</span>}<span class="g">···</span> <span class="hl"><span class="g">·····</span>a.b</span></span></div>
<div class="hr" style="top:122px"><span class="of d">0040</span><span class="hx"><span class="hl e">61 69 64 75 2e 63 6f 6d  00 50</span></span><span class="as"><span class="hl e">aidu.com <span class="g">·</span>P</span></span></div>
</div>
<svg class="redbox" width="2342" height="1634" viewBox="0 0 2342 1634">
<rect x="17.2" y="1065.1" width="788.4" height="135.7" fill="none" stroke="#d92216" stroke-width="8.3" stroke-linejoin="round"/>
<rect x="901.5" y="1376.5" width="305.5" height="97.5" fill="none" stroke="#d92216" stroke-width="8" stroke-linejoin="round"/>
</svg>
</div>
</body>
</html>
